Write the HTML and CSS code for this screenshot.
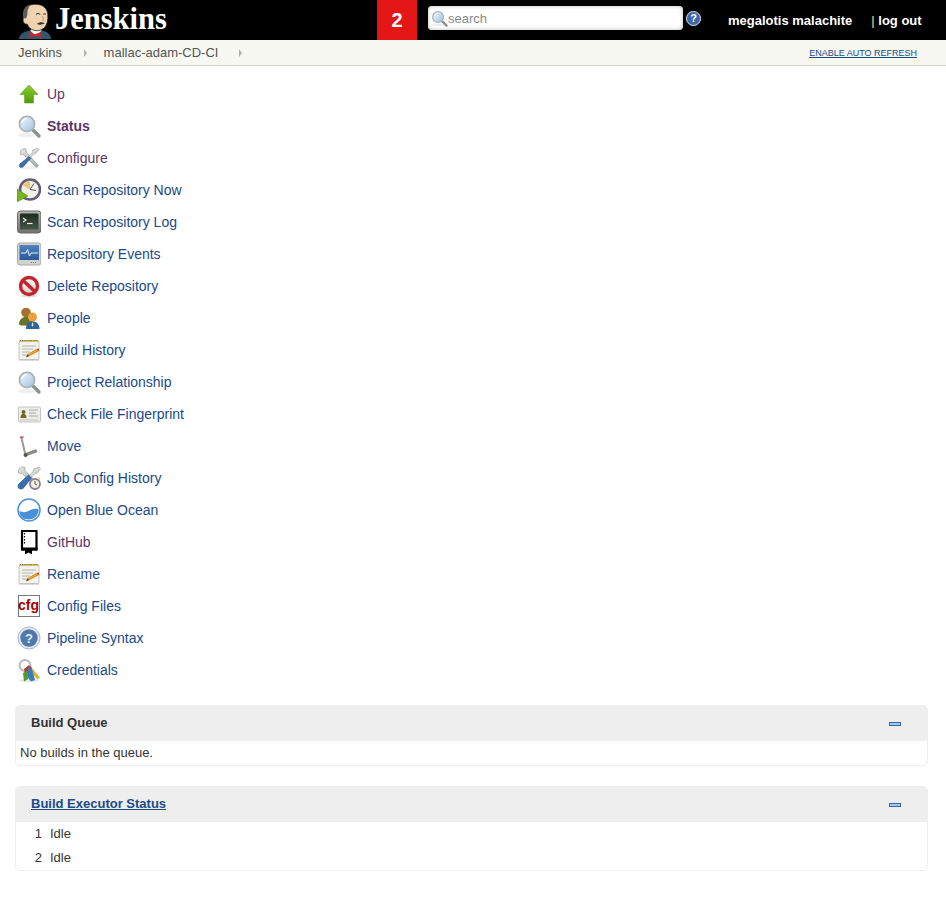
FILE: index.html
```html
<!DOCTYPE html>
<html lang="en">
<head>
    <meta charset="UTF-8">
    <title>mallac-adam-CD-CI [Jenkins]</title>
    <link rel="stylesheet" href="styles.css">
</head>
<body>
    <!-- shared icon shapes -->
    <svg class="icon-defs" aria-hidden="true">
        <defs>
            <linearGradient id="glass" x1="0" y1="0" x2="1" y2="1">
                <stop offset="0" stop-color="#f4f8fc"/>
                <stop offset="1" stop-color="#9dbfe3"/>
            </linearGradient>
            <linearGradient id="arrow" x1="0" y1="0" x2="0" y2="1">
                <stop offset="0" stop-color="#8fd02c"/>
                <stop offset="1" stop-color="#4e9a06"/>
            </linearGradient>
            <linearGradient id="screen" x1="0" y1="0" x2="0" y2="1">
                <stop offset="0" stop-color="#4f83bd"/>
                <stop offset="1" stop-color="#2a5a98"/>
            </linearGradient>
            <linearGradient id="steel" x1="0" y1="0" x2="1" y2="1">
                <stop offset="0" stop-color="#e6e8e4"/>
                <stop offset="1" stop-color="#a3a8a2"/>
            </linearGradient>
            <linearGradient id="term" x1="0" y1="0" x2="0" y2="1">
                <stop offset="0" stop-color="#b4b7b1"/>
                <stop offset="1" stop-color="#6e716c"/>
            </linearGradient>
            <linearGradient id="termscreen" x1="0" y1="0" x2="0" y2="1">
                <stop offset="0" stop-color="#1d2a22"/>
                <stop offset="1" stop-color="#46564a"/>
            </linearGradient>
            <linearGradient id="noentry" x1="0" y1="0" x2="0" y2="1">
                <stop offset="0" stop-color="#fff"/>
                <stop offset="1" stop-color="#cfcfcc"/>
            </linearGradient>
            <symbol id="i-search" viewBox="0 0 24 24">
                <ellipse cx="10" cy="21" rx="9" ry="2" fill="#eee"/>
                <path d="M15 15l7 7" stroke="#8a8f8c" stroke-width="3.2" stroke-linecap="round"/>
                <circle cx="10" cy="10" r="7.6" fill="url(#glass)" stroke="#a9b3b8" stroke-width="1.8"/>
                <path d="M5 9a5 5 0 0 1 5-4.5" fill="none" stroke="#fff" stroke-width="1.4"/>
            </symbol>
            <symbol id="i-tools" viewBox="0 0 24 24">
                <ellipse cx="12" cy="21.5" rx="10" ry="1.6" fill="#eee"/>
                <path d="M7 2.5a4.5 4.5 0 0 0-3.500 6l3.500 .5L19.500 21.500l2-2L9.500 6.500 9 3z" fill="url(#steel)" stroke="#8f948e" stroke-width=".6"/>
                <path d="M20.500 2l1.500 1.500-3 4-2 .2-4.500 5-1.500-1.500 4.500-5 .2-2z" fill="#d5d8d3" stroke="#8f948e" stroke-width=".5"/>
                <path d="M12 10.500l1.800 1.800-7.300 8.200c-1.200 1.300-2.800 1.300-3.600 .5s-.8-2.300 .5-3.500z" fill="#3a6fad" stroke="#24507f" stroke-width=".5"/>
            </symbol>
            <symbol id="i-note" viewBox="0 0 24 24">
                <path d="M2 21h20v2H2z" fill="#dcdcd6"/>
                <rect x="2" y="3" width="20" height="18.500" rx="1" fill="#f3f3ee" stroke="#c4c4bc"/>
                <rect x="2.500" y="2" width="19" height="2" fill="#cdbd74"/>
                <path d="M3 2.500h18" stroke="#75703f" stroke-dasharray="1 1.200"/>
                <path d="M5 8h14M5 11h11M5 14h8M5 17h5" stroke="#b2b2a8"/>
                <path d="M9.500 19l1-2.500L20 11l1.500 2-9.500 5z" fill="#eea02a" stroke="#a86b12" stroke-width=".5"/>
                <path d="M9.500 19l1-2.500 1.500 1.500z" fill="#3c3022"/>
                <path d="M20 11l1.500 2 1-.7-1.500-2z" fill="#c8352c"/>
            </symbol>
        </defs>
    </svg>

    <header class="top-bar">
        <a class="logo" href="#">
            <svg class="butler" viewBox="0 0 40 40">
                <path d="M3 40c1-6 6-8 12-9l12 0c5 1 9 3 10 9z" fill="#33566f"/>
                <path d="M15 31l6 6 6-6-2-3h-8z" fill="#f4f4f0"/>
                <path d="M14 33l6 2 6-2 .5 6-6.500-2.500-6.500 2.500z" fill="#c8242a"/>
                <path d="M8 14C8 6 14 3.500 21 3.500c7 0 12 4 12.500 11 .4 5.500-.5 10-3.500 13.500-3 3-8 4-12 2.500-3-1-5-3-6-6-3 0-5-2-4.500-5 .2-1.500.5-3 .5-5.500z" fill="#efd2b0" stroke="#231f20" stroke-width=".8"/>
                <path d="M8 18C6 11 9 5 15 4c-2 3-3 6-3 9 0 2-.5 4-1.500 5.500z" fill="#5b5c5e"/>
                <path d="M21 14c1.500-1 3-1 4.500 0M28.500 14c1-.6 2-.6 3 0" stroke="#231f20" stroke-width="1" fill="none"/>
                <path d="M22 24c3-2.500 6-2 8.500-.5-2 .5-3.500 1.500-5 1.500-1.500 0-2.500-.3-3.500-1z" fill="#3b2f2a"/>
                <path d="M28 16c.5 2 1 4 .5 5.500" stroke="#a87b5d" stroke-width=".8" fill="none"/>
            </svg>
            <span class="logo-text">Jenskins</span>
        </a>
        <span class="counter">2</span>
        <div class="search-box">
            <svg class="search-icon"><use href="#i-search"/></svg>
            <input class="search-input" type="text" placeholder="search">
        </div>
        <span class="help-icon">?</span>
        <a class="user-link" href="#">megalotis malachite</a>
        <span class="logout"><span class="logout-sep">|</span> <a href="#">log out</a></span>
    </header>

    <nav class="breadcrumbs">
        <a class="crumb crumb-first" href="#">Jenkins</a>
        <span class="crumb-arrow"></span>
        <a class="crumb crumb-job" href="#">mallac-adam-CD-CI</a>
        <span class="crumb-arrow"></span>
        <a class="auto-refresh" href="#">ENABLE AUTO REFRESH</a>
    </nav>

    <ul class="side-tasks">
        <li><svg class="task-icon" viewBox="0 0 24 24"><path d="M12 3l9 9.500h-4.500V21h-9v-8.500H3z" fill="url(#arrow)" stroke="#5d9e1c" stroke-width=".6"/></svg><a class="visited" href="#">Up</a></li>
        <li><svg class="task-icon"><use href="#i-search"/></svg><a class="visited current" href="#">Status</a></li>
        <li><svg class="task-icon"><use href="#i-tools"/></svg><a class="visited" href="#">Configure</a></li>
        <li>
            <svg class="task-icon" viewBox="0 0 24 24">
                <circle cx="13" cy="11.500" r="10" fill="#f2f1e8" stroke="#625b7c" stroke-width="2.600"/>
                <path d="M13 11.500V3.500a8 8 0 0 0-7 4z" fill="#e8c86a"/>
                <path d="M13 11.500l4-6M13 11.500l6 1" stroke="#555" stroke-width="1"/>
                <path d="M0 11l11 7-11 6z" fill="#72b51c" stroke="#4e8c0c" stroke-width=".5"/>
            </svg>
            <a href="#">Scan Repository Now</a>
        </li>
        <li>
            <svg class="task-icon" viewBox="0 0 24 24">
                <rect x=".5" y="1" width="23.500" height="22" rx="3" fill="url(#term)" stroke="#686b66"/>
                <rect x="3" y="3.500" width="18.500" height="16" rx="1" fill="url(#termscreen)"/>
                <path d="M6 8l3 2-3 2" fill="none" stroke="#e8efe4" stroke-width="1.200"/>
                <path d="M10 13.500h5.500" stroke="#e8efe4" stroke-width="1.200"/>
            </svg>
            <a href="#">Scan Repository Log</a>
        </li>
        <li>
            <svg class="task-icon" viewBox="0 0 24 24">
                <rect x=".5" y="1" width="23.500" height="22" rx="2.500" fill="#cfd2ce" stroke="#a7aaa6"/>
                <rect x="2.500" y="3" width="19.500" height="15" fill="url(#screen)"/>
                <path d="M4 11h5l1.500-3.500 2 6.500 1.500-3h7" fill="none" stroke="#dff0fa" stroke-width="1"/>
                <path d="M14 20.500h6" stroke="#7d807c" stroke-dasharray="1 1"/>
            </svg>
            <a href="#">Repository Events</a>
        </li>
        <li>
            <svg class="task-icon" viewBox="0 0 24 24">
                <ellipse cx="12" cy="22" rx="8" ry="1.500" fill="#ddd"/>
                <circle cx="12" cy="12" r="8.500" fill="url(#noentry)" stroke="#c4252b" stroke-width="3.400"/>
                <path d="M5.500 6l13 12" stroke="#c4252b" stroke-width="3.600"/>
            </svg>
            <a href="#">Delete Repository</a>
        </li>
        <li>
            <svg class="task-icon" viewBox="0 0 24 24">
                <circle cx="9" cy="6.500" r="4.800" fill="#a5712a"/>
                <path d="M2 18.500c0-5 3-7.500 7-7.500s6 2 7 5l-2 3.500H4z" fill="#66752a"/>
                <circle cx="15.500" cy="11" r="4.500" fill="#eca23a"/>
                <path d="M9 23c0-5 2.500-7.500 6.500-7.500S22.500 18 22.500 23z" fill="#2f659f"/>
                <path d="M15.500 16l-1 3 1 2 1-2z" fill="#f1f1ea"/>
            </svg>
            <a href="#">People</a>
        </li>
        <li><svg class="task-icon"><use href="#i-note"/></svg><a href="#">Build History</a></li>
        <li><svg class="task-icon"><use href="#i-search"/></svg><a href="#">Project Relationship</a></li>
        <li>
            <svg class="task-icon" viewBox="0 0 24 24">
                <rect x="1.500" y="5" width="22" height="15" rx="1" fill="#ececea" stroke="#c4c4c0"/>
                <circle cx="6.500" cy="10" r="2" fill="#6b6a1f"/>
                <path d="M3.500 16c0-3 1.500-4.500 3-4.500s3 1.500 3 4.500z" fill="#6b6a1f"/>
                <path d="M12 8h9M12 11h7M12 14h9" stroke="#a8a8a2"/>
                <path d="M3 18h18" stroke="#c4c4bc"/>
            </svg>
            <a href="#">Check File Fingerprint</a>
        </li>
        <li>
            <svg class="task-icon" viewBox="0 0 24 24">
                <path d="M4.500 4L8 19" stroke="#9a9c97" stroke-width="2" fill="none"/>
                <path d="M3 3.500l3.500-.5" stroke="#b0524f" stroke-width="1.600"/>
                <path d="M8 19.500L19 15.500l1 2.500-10 3.500z" fill="#8b8e88" stroke="#666963" stroke-width=".5"/>
                <circle cx="8.500" cy="21" r="2" fill="#55574f"/>
            </svg>
            <a href="#">Move</a>
        </li>
        <li>
            <svg class="task-icon" viewBox="0 0 24 24">
                <path d="M5.500 1a4.500 4.500 0 0 0-4 6l3.500 .5L17 19l2.500-2.500L8 4.500 8 1.500z" fill="url(#steel)" stroke="#8f948e" stroke-width=".6"/>
                <path d="M22 1l1.500 1.500-3 4.500-2.500 .5-4 4.500-2-2 4-4.500 .5-2.500z" fill="#d5d8d3" stroke="#8f948e" stroke-width=".5"/>
                <path d="M11.500 9l3 3-7.500 9.500C5.500 23.300 3 23.500 1.800 22.300S.7 19 2.200 17.500z" fill="#3a6fad" stroke="#24507f" stroke-width=".6"/>
                <circle cx="18" cy="18" r="5" fill="#f1eee0" stroke="#8c7d96" stroke-width="1.800"/>
                <path d="M18 15v3l2 1" stroke="#5c5c5c" fill="none"/>
                <path d="M21 10.500l2.500 2-1.500 1.500z" fill="#e4c93c"/>
            </svg>
            <a href="#">Job Config History</a>
        </li>
        <li>
            <svg class="task-icon" viewBox="0 0 24 24">
                <circle cx="12" cy="12" r="11" fill="#fff" stroke="#4a90d9" stroke-width="1.500"/>
                <path d="M2.500 13c3 1.500 6 1.500 9 0s6-2.500 10-2c.6 5-3.500 10.500-9.500 10.500S2.500 18 2.500 13z" fill="#4a90d9"/>
            </svg>
            <a href="#">Open Blue Ocean</a>
        </li>
        <li>
            <svg class="task-icon" viewBox="0 0 24 24">
                <path d="M5 1h14.500v18.500H5z" fill="#fff" stroke="#000" stroke-width="2.200" stroke-linejoin="round"/>
                <path d="M4 17.500h16.500V20.500H4z" fill="#000"/>
                <path d="M7.500 3v11" stroke="#000" stroke-width="1.200" stroke-dasharray="1.500 1.500"/>
                <path d="M8 19h7v5.500l-3.500-2-3.500 2z" fill="#000"/>
            </svg>
            <a class="visited" href="#">GitHub</a>
        </li>
        <li><svg class="task-icon"><use href="#i-note"/></svg><a href="#">Rename</a></li>
        <li>
            <svg class="task-icon" viewBox="0 0 24 24">
                <rect x="1.500" y="1.500" width="21" height="21" fill="#fff" stroke="#77797a"/>
                <text class="cfg-text" x="11.500" y="15.500" text-anchor="middle">cfg</text>
            </svg>
            <a href="#">Config Files</a>
        </li>
        <li>
            <svg class="task-icon" viewBox="0 0 24 24">
                <circle cx="12" cy="12" r="11" fill="#e4e9f0" stroke="#a8b6c8"/>
                <circle cx="12" cy="12" r="8.700" fill="#4f79ab"/>
                <text class="help-text" x="12" y="16.500" text-anchor="middle">?</text>
            </svg>
            <a href="#">Pipeline Syntax</a>
        </li>
        <li>
            <svg class="task-icon" viewBox="0 0 24 24">
                <ellipse cx="12" cy="22.500" rx="10" ry="1.500" fill="#e4e4e0"/>
                <circle cx="8" cy="7.500" r="5.500" fill="none" stroke="#b8bcb8" stroke-width="2"/>
                <path d="M14 9l9 10.500-2.500 2L12 12z" fill="#d8b13c"/>
                <path d="M7 11l5-4 3 3-3 5-4 1z" fill="#c8352c"/>
                <path d="M11 9l4 2 3 11-4 1.500-4-5z" fill="#3a7cb8"/>
                <path d="M6 15l4-2 1 8-4 2.500z" fill="#4e9a2a"/>
            </svg>
            <a href="#">Credentials</a>
        </li>
    </ul>

    <section class="pane pane-queue">
        <div class="pane-header">
            <span class="pane-title">Build Queue</span>
            <span class="collapse-btn"></span>
        </div>
        <div class="pane-body queue-body">No builds in the queue.</div>
    </section>

    <section class="pane">
        <div class="pane-header">
            <a class="pane-title pane-link" href="#">Build Executor Status</a>
            <span class="collapse-btn"></span>
        </div>
        <div class="pane-body">
            <div class="executor"><span class="executor-num">1</span><span>Idle</span></div>
            <div class="executor"><span class="executor-num">2</span><span>Idle</span></div>
        </div>
    </section>
</body>
</html>
```

FILE: styles.css
```css
body {
    margin: 0;
    background: #fff;
    color: #333;
    font-family: "Liberation Sans", Arial, Helvetica, sans-serif;
    font-size: 13px;
}

a {
    color: #204a87;
    text-decoration: none;
}

.icon-defs {
    display: block;
    width: 0;
    height: 0;
}

/* top bar */
.top-bar {
    display: flex;
    align-items: center;
    height: 40px;
    background: #000;
    color: #fff;
    overflow: hidden;
}

.logo {
    display: flex;
    align-items: center;
    width: 377px;
    height: 40px;
    flex-shrink: 0;
    padding-left: 16px;
    box-sizing: border-box;
}

.butler {
    width: 38px;
    height: 40px;
    flex-shrink: 0;
}

.logo-text {
    margin-left: 1px;
    margin-bottom: 2px;
    font-family: "Liberation Serif", Georgia, serif;
    font-size: 30.5px;
    font-weight: bold;
    color: #fff;
    line-height: 38px;
}

.counter {
    width: 40px;
    height: 40px;
    flex-shrink: 0;
    background: #e41616;
    color: #fff;
    font-size: 20px;
    font-weight: bold;
    line-height: 40px;
    text-align: center;
}

.search-box {
    display: flex;
    align-items: center;
    width: 255px;
    height: 24px;
    margin-left: 11px;
    margin-bottom: 4px;
    padding-left: 3px;
    box-sizing: border-box;
    background: #fff;
    border-radius: 4px;
    box-shadow: inset 0 0 4px #bbb;
}

.search-icon {
    width: 17px;
    height: 17px;
    flex-shrink: 0;
}

.search-input {
    flex: 1;
    min-width: 0;
    padding: 0;
    border: none;
    outline: none;
    background: transparent;
    font-family: inherit;
    font-size: 13px;
}

.search-input::placeholder {
    color: #888;
    opacity: 1;
}

.help-icon {
    width: 13px;
    height: 13px;
    flex-shrink: 0;
    margin-left: 3px;
    margin-bottom: 3px;
    border: 1px solid #dfe6f0;
    border-radius: 50%;
    background: #3d66a5;
    color: #fff;
    font-size: 11px;
    font-weight: bold;
    line-height: 13px;
    text-align: center;
}

.user-link,
.logout a {
    color: #fff;
    font-weight: bold;
}

.user-link {
    margin-left: 27px;
    margin-top: 1px;
}

.logout {
    margin-left: 19px;
    margin-top: 1px;
}

.logout-sep {
    color: #e8e2a8;
}

/* breadcrumbs */
.breadcrumbs {
    display: flex;
    align-items: center;
    height: 25px;
    padding-left: 18px;
    padding-right: 29px;
    background: #f6f8f1;
    border-bottom: 1px solid #d3d7cf;
}

.crumb {
    color: #555;
}

.crumb-arrow {
    width: 0;
    height: 0;
    border-left: 3px solid #b0b2ac;
    border-top: 4px solid transparent;
    border-bottom: 4px solid transparent;
}

.crumb-first + .crumb-arrow {
    margin-left: 22px;
}

.crumb-job {
    margin-left: 16.5px;
}

.crumb-job + .crumb-arrow {
    margin-left: 21px;
}

.auto-refresh {
    margin-left: auto;
    font-size: 9px;
    text-decoration: underline;
}

/* side panel */
.side-tasks {
    margin: 12px 0 0;
    padding: 0 0 0 17px;
    list-style: none;
    font-size: 14px;
}

.side-tasks li {
    display: flex;
    align-items: center;
    height: 32px;
}

.task-icon {
    width: 24px;
    height: 24px;
    flex-shrink: 0;
    margin-right: 6px;
}

.side-tasks .visited {
    color: #5c3566;
}

.side-tasks .current {
    font-weight: bold;
}

.cfg-text {
    font-family: "Liberation Sans", sans-serif;
    font-size: 14px;
    font-weight: bold;
    fill: #a40000;
}

.help-text {
    font-family: "Liberation Sans", sans-serif;
    font-size: 13px;
    font-weight: bold;
    fill: #e8eef6;
}

/* panes */
.pane {
    margin: 20px 18px 0 15px;
    border: 1px solid #eee;
    border-radius: 5px;
    overflow: hidden;
}

.pane-queue {
    margin-top: 19px;
}

.pane-header {
    display: flex;
    align-items: center;
    justify-content: space-between;
    height: 35px;
    padding: 0 26px 0 15px;
    background: #eee;
}

.pane-title {
    font-weight: bold;
    margin-bottom: 2px;
}

.pane-link {
    text-decoration: underline;
}

.collapse-btn {
    width: 10px;
    height: 2px;
    margin-top: 1px;
    border: 1px solid #3566a8;
    background: #a9c4e6;
}

.queue-body {
    padding: 4px;
    line-height: 16px;
}

.executor {
    display: flex;
    height: 24px;
    line-height: 24px;
}

.executor-num {
    width: 26px;
    margin-right: 8px;
    text-align: right;
}
```
